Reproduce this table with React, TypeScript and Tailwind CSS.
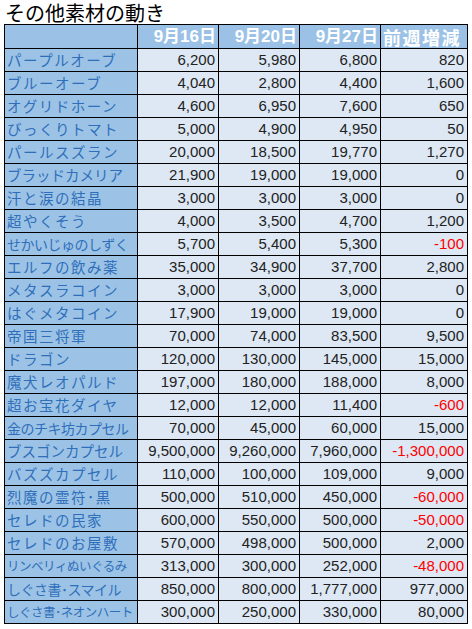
const rows: [string, string, string, string, string][] = [
  ["パープルオーブ", "6,200", "5,980", "6,800", "820"],
  ["ブルーオーブ", "4,040", "2,800", "4,400", "1,600"],
  ["オグリドホーン", "4,600", "6,950", "7,600", "650"],
  ["びっくりトマト", "5,000", "4,900", "4,950", "50"],
  ["パールスズラン", "20,000", "18,500", "19,770", "1,270"],
  ["ブラッドカメリア", "21,900", "19,000", "19,000", "0"],
  ["汗と涙の結晶", "3,000", "3,000", "3,000", "0"],
  ["超やくそう", "4,000", "3,500", "4,700", "1,200"],
  ["せかいじゅのしずく", "5,700", "5,400", "5,300", "-100"],
  ["エルフの飲み薬", "35,000", "34,900", "37,700", "2,800"],
  ["メタスラコイン", "3,000", "3,000", "3,000", "0"],
  ["はぐメタコイン", "17,900", "19,000", "19,000", "0"],
  ["帝国三将軍", "70,000", "74,000", "83,500", "9,500"],
  ["ドラゴン", "120,000", "130,000", "145,000", "15,000"],
  ["魔犬レオパルド", "197,000", "180,000", "188,000", "8,000"],
  ["超お宝花ダイヤ", "12,000", "12,000", "11,400", "-600"],
  ["金のチキ坊カプセル", "70,000", "45,000", "60,000", "15,000"],
  ["ブスゴンカプセル", "9,500,000", "9,260,000", "7,960,000", "-1,300,000"],
  ["バズズカプセル", "110,000", "100,000", "109,000", "9,000"],
  ["烈魔の霊符･黒", "500,000", "510,000", "450,000", "-60,000"],
  ["セレドの民家", "600,000", "550,000", "500,000", "-50,000"],
  ["セレドのお屋敷", "570,000", "498,000", "500,000", "2,000"],
  ["リンベリィぬいぐるみ", "313,000", "300,000", "252,000", "-48,000"],
  ["しぐさ書･スマイル", "850,000", "800,000", "1,777,000", "977,000"],
  ["しぐさ書･ネオンハート", "300,000", "250,000", "330,000", "80,000"],
];

const jp = "font-['Noto_Sans_CJK_JP',sans-serif]";
const num = "font-['Liberation_Sans','Noto_Sans_CJK_JP',sans-serif]";

// fit longer names into the first column
const nameSize = (n: string) => {
  if (n.length >= 10) return "text-[12.5px] tracking-[-0.5px]";
  if (n.length === 9) return "text-[14px] tracking-[-0.5px]";
  if (n.length === 8) return "text-[14.5px] tracking-[0px]";
  return "text-[14.5px] tracking-[1.5px]";
};

export default function App() {
  return (
    <div className="w-[472px] h-[629px] bg-white overflow-hidden">
      <h1 className={`${jp} text-[20px] leading-[22px] h-[24px] pt-[2px] pl-[5px] text-black`}>
        その他素材の動き
      </h1>
      <table className="ml-[4px] border-collapse table-fixed w-[463px]">
        <colgroup>
          <col className="w-[133px]" />
          <col className="w-[81px]" />
          <col className="w-[81px]" />
          <col className="w-[81px]" />
          <col className="w-[87px]" />
        </colgroup>
        <thead>
          <tr className="h-[24px] bg-[#9bc2e6]">
            <th className="border border-black"></th>
            {["9月16日", "9月20日", "9月27日"].map((h) => (
              <th
                key={h}
                className={`border border-black pr-[2px] text-right text-[17px] leading-[20px] font-bold text-white whitespace-nowrap ${num}`}
              >
                {h}
              </th>
            ))}
            <th
              className={`border border-black pl-[2px] text-left text-[18px] leading-[20px] font-bold text-white tracking-[1.5px] whitespace-nowrap ${jp}`}
            >
              前週増減
            </th>
          </tr>
        </thead>
        <tbody>
          {rows.map((r) => (
            <tr key={r[0]} className="h-[23px]">
              <td className={`border border-black bg-[#9cc3e6] px-[2px] whitespace-nowrap overflow-hidden leading-[18px] text-[#2f6fba] ${jp} ${nameSize(r[0])}`}>
                {r[0]}
              </td>
              {r.slice(1).map((v, i) => (
                <td
                  key={i}
                  className={`border border-black bg-[#dde8f4] pr-[3px] text-right text-[15px] leading-[18px] whitespace-nowrap ${num} ${v.startsWith("-") ? "text-[#ff0000]" : "text-[#222]"}`}
                >
                  {v}
                </td>
              ))}
            </tr>
          ))}
        </tbody>
      </table>
    </div>
  );
}
